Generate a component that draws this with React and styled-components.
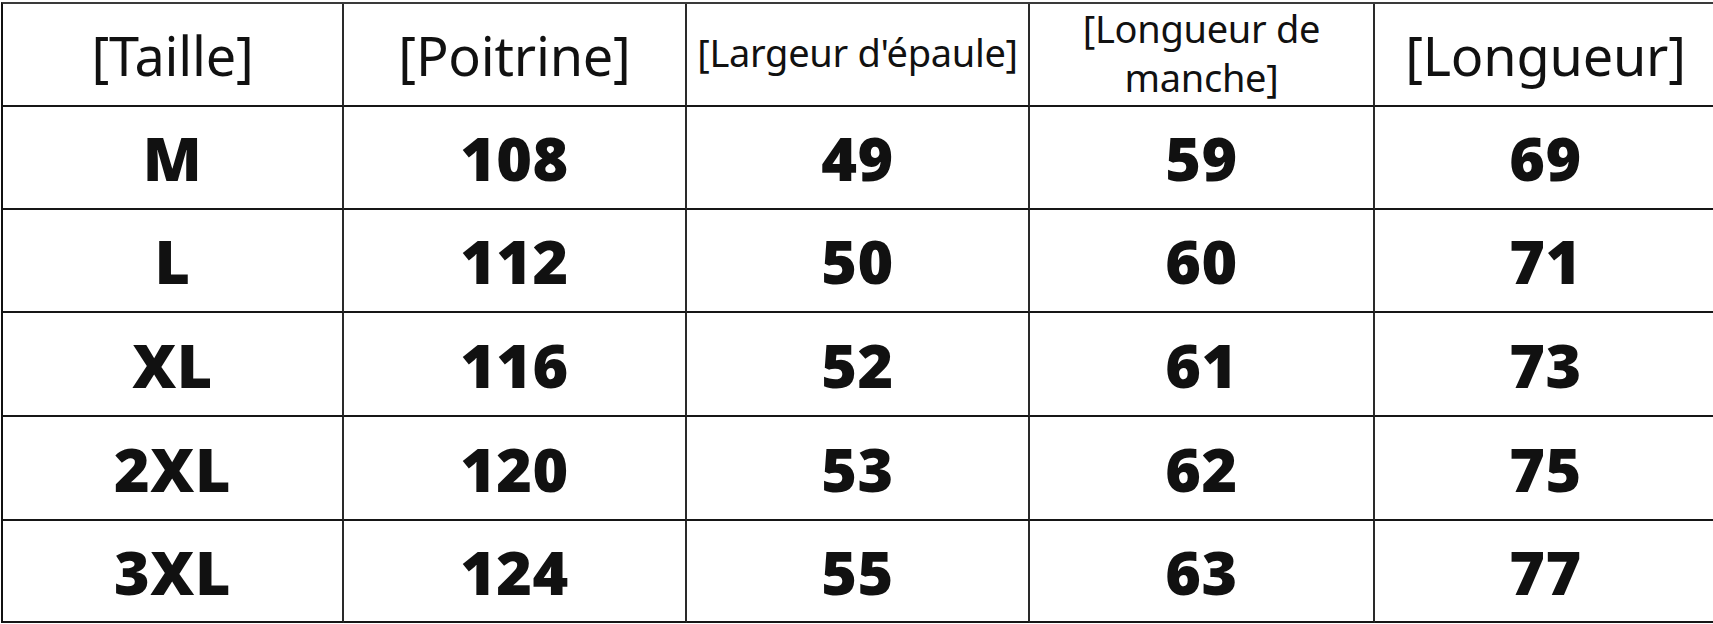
import React from 'react';
import styled, { createGlobalStyle } from 'styled-components';

const GlobalStyle = createGlobalStyle`
  html, body {
    margin: 0;
    padding: 0;
    background: #fff;
  }
  body {
    width: 1713px;
    height: 624px;
    overflow: hidden;
  }
`;

const Page = styled.div`
  padding: 2px 0 0 1px;
`;

const Table = styled.div`
  display: grid;
  grid-template-columns: 341px 343px 343px 345px 343px;
  grid-template-rows: 103px 103px 103px 104px 104px 102px;
  border-top: 2px solid #3a3a3a;
  border-left: 2px solid #111;
  width: max-content;
`;

const Cell = styled.div`
  display: flex;
  align-items: center;
  justify-content: center;
  text-align: center;
  border-right: 2px solid #2a2a2a;
  border-bottom: 2px solid #161616;
  color: #111;
`;

const HeadCell = styled(Cell)`
  font-family: 'Noto Sans', 'Open Sans', sans-serif;
  font-weight: 400;
  font-size: ${({ $small }) => ($small ? '38px' : '54px')};
  line-height: ${({ $small }) => ($small ? '49px' : '1.1')};
  padding: ${({ $small }) => ($small ? '0 4px 4px' : '2px 0 0')};
  letter-spacing: ${({ $small }) => ($small ? '-0.3px' : '-0.2px')};
`;

const DataCell = styled(Cell)`
  font-family: 'Noto Sans', 'DejaVu Sans', sans-serif;
  font-weight: 900;
  font-size: 61px;
  line-height: 1;
  letter-spacing: 0.5px;
`;

const headers = [
  { label: '[Taille]' },
  { label: '[Poitrine]' },
  { label: "[Largeur d'épaule]", small: true },
  { label: '[Longueur de manche]', small: true },
  { label: '[Longueur]' },
];

const rows = [
  ['M', 108, 49, 59, 69],
  ['L', 112, 50, 60, 71],
  ['XL', 116, 52, 61, 73],
  ['2XL', 120, 53, 62, 75],
  ['3XL', 124, 55, 63, 77],
];

export default function App() {
  return (
    <>
      <GlobalStyle />
      <Page>
        <Table>
          {headers.map(h => (
            <HeadCell key={h.label} $small={h.small}>
              {h.label}
            </HeadCell>
          ))}
          {rows.map(row =>
            row.map((value, i) => (
              <DataCell key={`${row[0]}-${i}`}>{value}</DataCell>
            )),
          )}
        </Table>
      </Page>
    </>
  );
}
